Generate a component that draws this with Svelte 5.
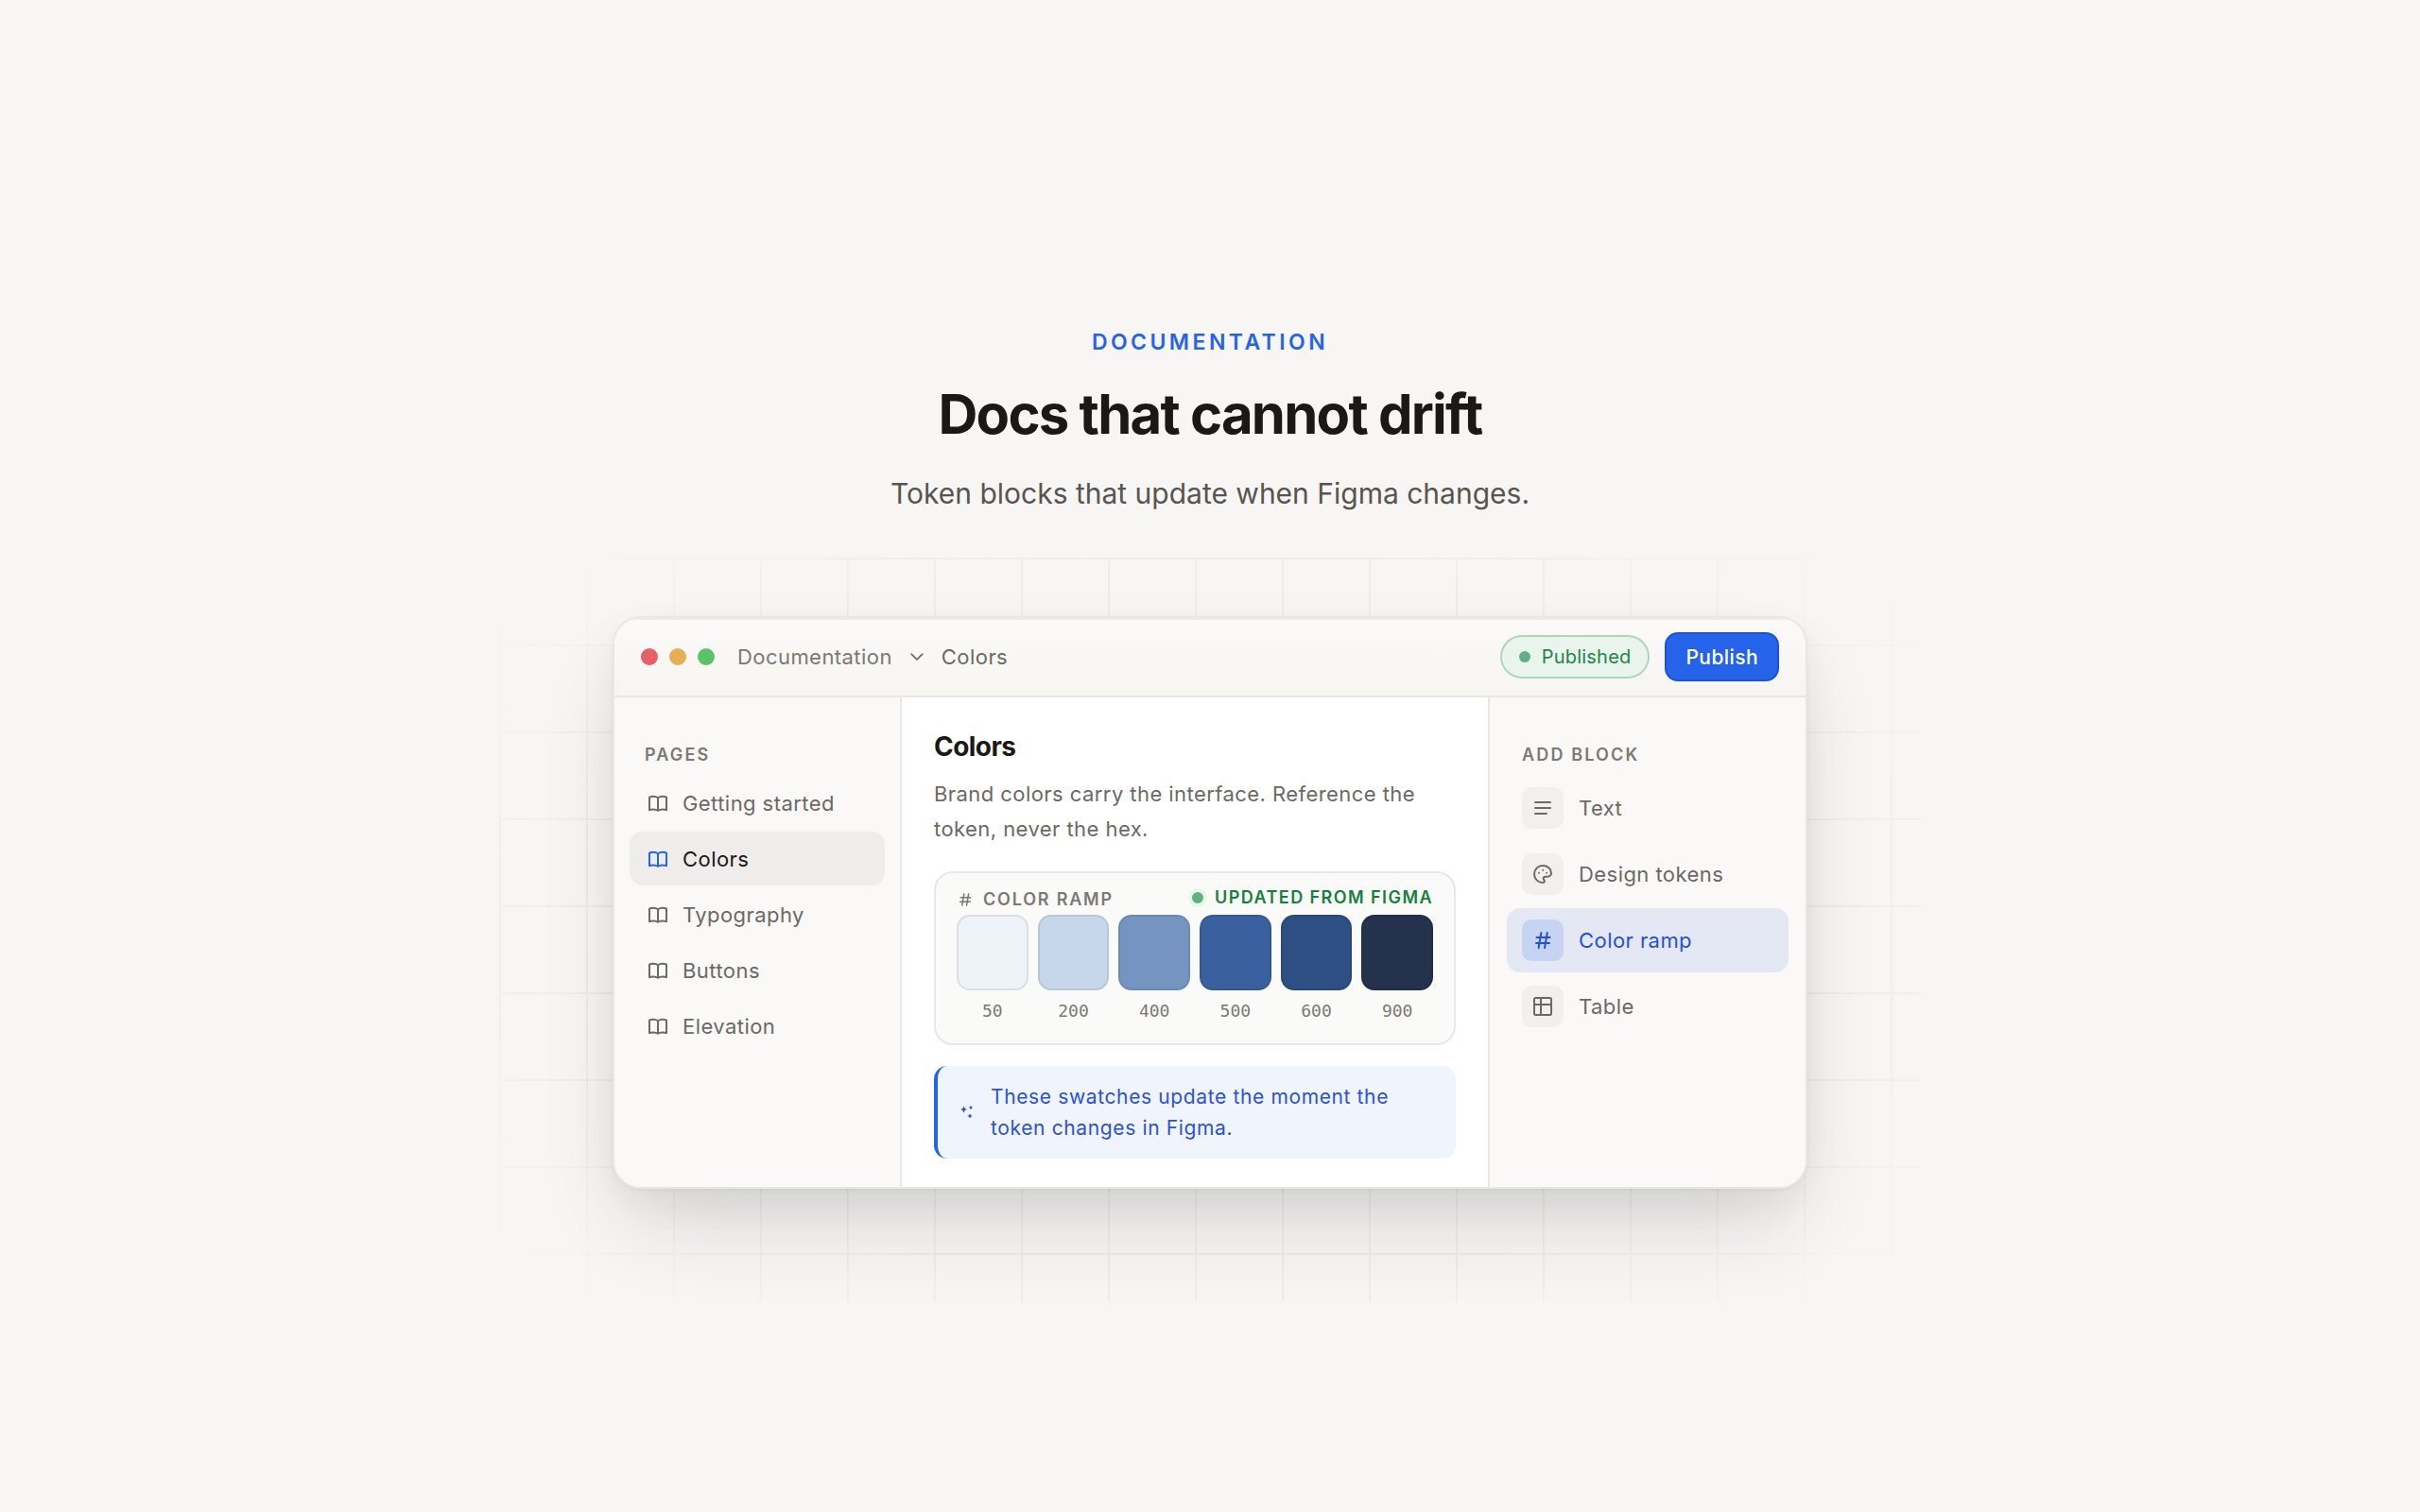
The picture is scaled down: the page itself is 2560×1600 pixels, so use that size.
<script lang="ts">
  const pages = ['Getting started', 'Colors', 'Typography', 'Buttons', 'Elevation'];
  const blocks = [
    { name: 'Text', icon: 'text' },
    { name: 'Design tokens', icon: 'palette' },
    { name: 'Color ramp', icon: 'hash' },
    { name: 'Table', icon: 'table' }
  ];
  const ramp = [
    { step: '50', color: '#eef3fa' },
    { step: '200', color: '#c7d7eb' },
    { step: '400', color: '#7595c0' },
    { step: '500', color: '#3a60a0' },
    { step: '600', color: '#2e4f84' },
    { step: '900', color: '#24324e' }
  ];

  let activePage = $state('Colors');
  let activeBlock = $state('Color ramp');
</script>

{#snippet icon(name: string)}
  <svg class="icon" viewBox="0 0 24 24" aria-hidden="true">
    {#if name === 'book'}
      <path d="M12 6.200C10.800 5.300 9 4.800 7 4.800c-1.500 0-2.900.3-4 .8v13.600c1.100-.5 2.500-.8 4-.8 2 0 3.800.5 5 1.400 1.200-.9 3-1.400 5-1.400 1.500 0 2.900.3 4 .8V5.600c-1.100-.5-2.500-.8-4-.8-2 0-3.800.5-5 1.400zM12 6.200v13.600" />
    {:else if name === 'text'}
      <path d="M4 6h16M4 12h16M4 18h12" />
    {:else if name === 'palette'}
      <path d="M12 3a9 9 0 0 0 0 18c1.300 0 1.800-.8 1.800-1.700 0-1.200-1.200-1.500-1.200-2.800 0-1.100.9-1.800 2-1.800h2.200c2.400 0 4.200-1.700 4.200-4C21 6.300 17 3 12 3z" />
      <path class="dots" d="M8 10.800h.01M12.200 7.800h.01M16.200 10.800h.01" />
    {:else if name === 'hash'}
      <path d="M5.500 9h14M5 15h14M10.400 4 7.600 20M16.800 4 14 20" />
    {:else if name === 'table'}
      <rect x="3" y="3" width="18" height="18" rx="1.500" />
      <path d="M3 10h18M10 3v18" />
    {:else if name === 'chevron'}
      <path d="m5 8.500 7 7 7-7" />
    {/if}
  </svg>
{/snippet}

<main>
  <header class="intro">
    <p class="eyebrow">DOCUMENTATION</p>
    <h1>Docs that cannot drift</h1>
    <p class="lead">Token blocks that update when Figma changes.</p>
  </header>

  <div class="stage">
    <div class="grid"></div>

    <section class="window">
      <div class="topbar">
        <div class="lights">
          <span class="light red"></span>
          <span class="light amber"></span>
          <span class="light green"></span>
        </div>
        <nav class="crumbs" aria-label="Breadcrumb">
          <a href="#docs">Documentation</a>
          {@render icon('chevron')}
          <span class="here">Colors</span>
        </nav>
        <span class="status"><span class="dot"></span>Published</span>
        <button class="publish">Publish</button>
      </div>

      <div class="body">
        <aside class="pages">
          <h2 class="label">PAGES</h2>
          {#each pages as page}
            <button class="page" class:active={page === activePage} onclick={() => (activePage = page)}>
              {@render icon('book')}
              {page}
            </button>
          {/each}
        </aside>

        <article class="doc">
          <h2>Colors</h2>
          <p class="text">Brand colors carry the interface. Reference the token, never the hex.</p>

          <div class="ramp">
            <div class="ramp-head">
              <span class="ramp-title">{@render icon('hash')}COLOR RAMP</span>
              <span class="synced"><span class="dot"></span>UPDATED FROM FIGMA</span>
            </div>
            <div class="swatches">
              {#each ramp as item}
                <div class="swatch">
                  <span class="chip" style="background-color: {item.color}"></span>
                  <span class="step">{item.step}</span>
                </div>
              {/each}
            </div>
          </div>

          <div class="note">
            <svg class="sparkle" viewBox="0 0 14 14" aria-hidden="true">
              <path d="M3.500.5 4.700 3 7 4 4.700 5 3.500 7.500 2.300 5 0 4l2.300-1z" />
              <path d="m10 8.500 1 1.700 1.800.8-1.800.8-1 1.700-1-1.700-1.800-.8 1.800-.8z" />
              <circle cx="11" cy="2" r="1.500" />
            </svg>
            <p>These swatches update the moment the token changes in Figma.</p>
          </div>
        </article>

        <aside class="blocks">
          <h2 class="label">ADD BLOCK</h2>
          {#each blocks as block}
            <button class="block" class:active={block.name === activeBlock} onclick={() => (activeBlock = block.name)}>
              <span class="tile">{@render icon(block.icon)}</span>
              {block.name}
            </button>
          {/each}
        </aside>
      </div>
    </section>
  </div>
</main>

<style>
:global(body) {
  margin: 0;
  background: #f7f6f4;
}

main {
  box-sizing: border-box;
  min-height: 100vh;
  padding-top: 126px;
  display: flex;
  flex-direction: column;
  align-items: center;
  justify-content: center;
  font-family: Inter, "Liberation Sans", sans-serif;
  color: #6b6965;
}

h1,
h2,
p {
  margin: 0;
}

button {
  font: inherit;
  letter-spacing: inherit;
  color: inherit;
  border: none;
  background: none;
  cursor: pointer;
}

.intro {
  display: flex;
  flex-direction: column;
  align-items: center;
  text-align: center;
}

.eyebrow {
  font-size: 23px;
  line-height: 28px;
  font-weight: 600;
  letter-spacing: 0.15em;
  color: #2563eb;
}

h1 {
  margin-top: 24px;
  font-size: 58px;
  line-height: 76px;
  font-weight: 700;
  letter-spacing: -0.03em;
  color: #1a1916;
}

.lead {
  margin-top: 24px;
  font-size: 30px;
  line-height: 44px;
  color: #57554f;
}

.stage {
  position: relative;
  width: 1504px;
  max-width: 100%;
  margin-top: 46px;
  padding: 62px 0 120px;
  display: flex;
  justify-content: center;
}

.grid {
  position: absolute;
  inset: 0;
  background-image:
    linear-gradient(to right, #edece9 2px, transparent 2px),
    linear-gradient(to bottom, #edece9 2px, transparent 2px);
  background-size: 92px 92px;
  mask-image: radial-gradient(ellipse 62% 70% at 50% 50%, #000 70%, transparent 100%);
}

.window {
  position: relative;
  box-sizing: border-box;
  width: 1264px;
  border: 2px solid #e8e7e4;
  border-radius: 30px;
  overflow: hidden;
  background: #fff;
  box-shadow:
    0 2px 4px rgba(40, 36, 28, 0.04),
    0 16px 40px rgba(40, 36, 28, 0.05),
    0 48px 96px -20px rgba(40, 36, 28, 0.16);
}

.topbar {
  display: flex;
  align-items: center;
  height: 82px;
  padding: 0 28px;
  border-bottom: 2px solid #e8e7e3;
  background: linear-gradient(#fbfaf8, #f6f5f2);
  box-shadow: inset 0 2px 0 #edece9;
}

.lights {
  display: flex;
  gap: 12px;
}

.light {
  width: 18px;
  height: 18px;
  border-radius: 50%;
}

.red {
  background: #e56067;
}

.amber {
  background: #e8ae55;
}

.green {
  background: #5bc367;
}

.crumbs {
  flex: 1;
  display: flex;
  align-items: center;
  gap: 16px;
  margin-left: 24px;
  font-size: 22px;
  letter-spacing: 0.02em;
}

.crumbs a {
  color: #7b7974;
  text-decoration: none;
}

.icon {
  flex: none;
  width: 24px;
  height: 24px;
  fill: none;
  stroke: currentColor;
  stroke-width: 2;
  stroke-linecap: round;
  stroke-linejoin: round;
}

.crumbs .icon {
  width: 20px;
  height: 20px;
}

.status {
  display: flex;
  align-items: center;
  box-sizing: border-box;
  height: 46px;
  padding: 0 18px;
  border: 2px solid #aed6bf;
  border-radius: 23px;
  background: #e9f5ec;
  font-size: 20px;
  letter-spacing: 0.01em;
  color: #23834a;
}

.dot {
  width: 12px;
  height: 12px;
  margin-right: 12px;
  border-radius: 50%;
  background: #65ae83;
  box-shadow: 0 0 0 4px #e4f7e9;
}

.publish {
  height: 52px;
  margin-left: 16px;
  padding: 0 20px;
  border: 2px solid #1d50dc;
  border-radius: 14px;
  background: #2563eb;
  font-size: 21px;
  font-weight: 500;
  letter-spacing: 0.02em;
  color: #fff;
}

.body {
  display: grid;
  grid-template-columns: 304px 1fr 336px;
}

.pages,
.blocks {
  box-sizing: border-box;
  display: flex;
  flex-direction: column;
  gap: 2px;
  padding: 49px 16px 32px;
  background: #faf9f7;
}

.pages {
  border-right: 2px solid #e8e7e3;
}

.blocks {
  padding: 49px 18px 32px;
  border-left: 2px solid #e8e7e3;
}

.label {
  padding: 0 16px 8px;
  font-size: 18px;
  line-height: 24px;
  font-weight: 600;
  letter-spacing: 0.12em;
  color: #7b7974;
}

.page {
  display: flex;
  align-items: center;
  gap: 14px;
  height: 57px;
  padding: 0 18px;
  border-radius: 14px;
  font-size: 22px;
  letter-spacing: 0.02em;
}

.page.active {
  background: #eeedeb;
  color: #1a1916;
}

.page.active .icon {
  color: #2563eb;
}

.block {
  display: flex;
  align-items: center;
  gap: 16px;
  height: 68px;
  padding: 0 16px;
  border-radius: 14px;
  font-size: 22px;
  letter-spacing: 0.02em;
}

.tile {
  display: grid;
  place-items: center;
  width: 44px;
  height: 44px;
  border-radius: 10px;
  background: #f1f0ee;
}

.block.active {
  background: #e4e8f5;
  color: #2450dc;
}

.block.active .tile {
  background: #c6d4f4;
}

.doc {
  padding: 32px 34px 30px;
}

.doc h2 {
  font-size: 28px;
  line-height: 40px;
  font-weight: 700;
  letter-spacing: -0.02em;
  color: #1a1916;
}

.text {
  margin-top: 12px;
  font-size: 22px;
  line-height: 37px;
  letter-spacing: 0.02em;
}

.ramp {
  margin-top: 26px;
  padding: 14px 22px 22px;
  border: 2px solid #e8e8e6;
  border-radius: 20px;
  background: #fafaf9;
}

.ramp-head {
  display: flex;
  justify-content: space-between;
  align-items: flex-start;
  font-size: 18px;
  line-height: 24px;
  font-weight: 600;
}

.ramp-title,
.synced {
  display: flex;
  align-items: center;
}

.ramp-title {
  gap: 10px;
  padding-top: 2px;
  color: #7b7974;
  letter-spacing: 0.1em;
}

.ramp-title .icon {
  width: 18px;
  height: 18px;
}

.synced {
  color: #15803d;
  letter-spacing: 0.08em;
}

.swatches {
  display: grid;
  grid-template-columns: repeat(6, 1fr);
  gap: 10px;
  margin-top: 4px;
}

.swatch {
  display: flex;
  flex-direction: column;
  align-items: center;
  gap: 10px;
}

.chip {
  box-sizing: border-box;
  width: 100%;
  height: 80px;
  border: 2px solid rgba(0, 0, 0, 0.08);
  border-radius: 14px;
}

.step {
  font-family: "DejaVu Sans Mono", monospace;
  font-size: 18px;
  line-height: 24px;
  color: #7b7974;
}

.note {
  display: flex;
  align-items: center;
  gap: 18px;
  margin-top: 22px;
  padding: 16px 24px;
  border-left: 4px solid #2563eb;
  border-radius: 14px;
  background: #eff4fd;
  color: #2c52d6;
  font-size: 21px;
  line-height: 33px;
  letter-spacing: 0.03em;
}

.sparkle {
  flex: none;
  width: 14px;
  height: 14px;
  fill: currentColor;
}
</style>
